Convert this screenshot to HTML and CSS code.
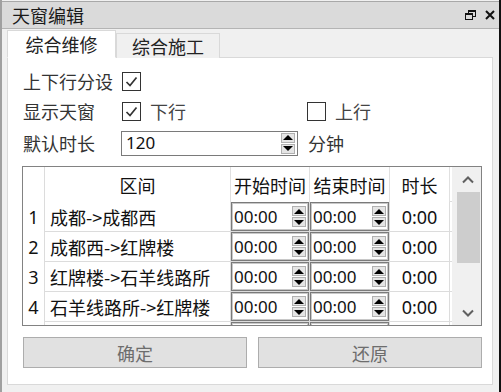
FILE: index.html
```html
<!DOCTYPE html>
<html>
<head>
	<title>天窗编辑</title>
	<link rel="stylesheet" href="styles.css">
</head>
<body>
<div class="window">
	<div class="titlebar">
		<span class="title">天窗编辑</span>
		<span class="tb-icons">
			<svg width="11" height="10" viewBox="0 0 11 10">
				<rect x="3.5" y="0.5" width="7" height="6" fill="none" stroke="#111" stroke-width="1"/>
				<line x1="3" y1="1" x2="11" y2="1" stroke="#111" stroke-width="2"/>
				<rect x="0.5" y="3.5" width="7" height="6" fill="#dadada" stroke="#111" stroke-width="1"/>
				<line x1="0" y1="4" x2="8" y2="4" stroke="#111" stroke-width="2"/>
			</svg>
			<svg width="10" height="10" viewBox="0 0 10 10">
				<path d="M1 1 L9 9 M9 1 L1 9" stroke="#111" stroke-width="2"/>
			</svg>
		</span>
	</div>

	<div class="tabs">
		<div class="tab active">综合维修</div>
		<div class="tab">综合施工</div>
	</div>

	<div class="panel">
		<div class="row">
			<span class="label">上下行分设</span>
			<span class="check on"><svg width="17" height="17" viewBox="0 0 17 17"><path d="M3.5 9 L7 12.5 L13.5 4.5" fill="none" stroke="#333" stroke-width="1.7"/></svg></span>
		</div>
		<div class="row">
			<span class="label">显示天窗</span>
			<span class="opt">
				<span class="check on"><svg width="17" height="17" viewBox="0 0 17 17"><path d="M3.5 9 L7 12.5 L13.5 4.5" fill="none" stroke="#333" stroke-width="1.7"/></svg></span>
				<span class="opt-text">下行</span>
			</span>
			<span class="opt">
				<span class="check"></span>
				<span class="opt-text">上行</span>
			</span>
		</div>
		<div class="row row-tall">
			<span class="label label-narrow">默认时长</span>
			<span class="spin spin-wide">
				<span class="spin-val">120</span>
				<span class="spin-btns">
					<span class="sbtn"><i class="tri up"></i></span>
					<span class="sbtn"><i class="tri down"></i></span>
				</span>
			</span>
			<span class="unit">分钟</span>
		</div>

		<div class="table">
			<div class="cells">
				<div class="hd num"></div>
				<div class="hd">区间</div>
				<div class="hd">开始时间</div>
				<div class="hd">结束时间</div>
				<div class="hd">时长</div>
				<div class="hd fill"></div>

				<div class="num">1</div>
				<div class="cell name">成都-&gt;成都西</div>
				<div class="cell"><span class="spin"><span class="spin-val">00:00</span><span class="spin-btns"><span class="sbtn"><i class="tri up"></i></span><span class="sbtn"><i class="tri down"></i></span></span></span></div>
				<div class="cell"><span class="spin"><span class="spin-val">00:00</span><span class="spin-btns"><span class="sbtn"><i class="tri up"></i></span><span class="sbtn"><i class="tri down"></i></span></span></span></div>
				<div class="cell dur">0:00</div>
				<div class="fill"></div>

				<div class="num">2</div>
				<div class="cell name">成都西-&gt;红牌楼</div>
				<div class="cell"><span class="spin"><span class="spin-val">00:00</span><span class="spin-btns"><span class="sbtn"><i class="tri up"></i></span><span class="sbtn"><i class="tri down"></i></span></span></span></div>
				<div class="cell"><span class="spin"><span class="spin-val">00:00</span><span class="spin-btns"><span class="sbtn"><i class="tri up"></i></span><span class="sbtn"><i class="tri down"></i></span></span></span></div>
				<div class="cell dur">0:00</div>
				<div class="fill"></div>

				<div class="num">3</div>
				<div class="cell name">红牌楼-&gt;石羊线路所</div>
				<div class="cell"><span class="spin"><span class="spin-val">00:00</span><span class="spin-btns"><span class="sbtn"><i class="tri up"></i></span><span class="sbtn"><i class="tri down"></i></span></span></span></div>
				<div class="cell"><span class="spin"><span class="spin-val">00:00</span><span class="spin-btns"><span class="sbtn"><i class="tri up"></i></span><span class="sbtn"><i class="tri down"></i></span></span></span></div>
				<div class="cell dur">0:00</div>
				<div class="fill"></div>

				<div class="num">4</div>
				<div class="cell name">石羊线路所-&gt;红牌楼</div>
				<div class="cell"><span class="spin"><span class="spin-val">00:00</span><span class="spin-btns"><span class="sbtn"><i class="tri up"></i></span><span class="sbtn"><i class="tri down"></i></span></span></span></div>
				<div class="cell"><span class="spin"><span class="spin-val">00:00</span><span class="spin-btns"><span class="sbtn"><i class="tri up"></i></span><span class="sbtn"><i class="tri down"></i></span></span></span></div>
				<div class="cell dur">0:00</div>
				<div class="fill"></div>

				<!-- fifth row only peeks in under the table edge -->
				<div class="num"></div>
				<div class="cell name"></div>
				<div class="cell"><span class="spin"><span class="spin-val"></span><span class="spin-btns"><span class="sbtn"><i class="tri up"></i></span><span class="sbtn"><i class="tri down"></i></span></span></span></div>
				<div class="cell"><span class="spin"><span class="spin-val"></span><span class="spin-btns"><span class="sbtn"><i class="tri up"></i></span><span class="sbtn"><i class="tri down"></i></span></span></span></div>
				<div class="cell dur"></div>
				<div class="fill"></div>
			</div>
			<div class="scrollbar">
				<div class="sb-arrow">
					<svg width="12" height="8" viewBox="0 0 12 8"><path d="M1 6.5 L6 1.5 L11 6.5" fill="none" stroke="#606060" stroke-width="2"/></svg>
				</div>
				<div class="sb-thumb"></div>
				<div class="sb-track"></div>
				<div class="sb-arrow">
					<svg width="12" height="8" viewBox="0 0 12 8"><path d="M1 1.5 L6 6.5 L11 1.5" fill="none" stroke="#606060" stroke-width="2"/></svg>
				</div>
			</div>
		</div>

		<div class="buttons">
			<button class="btn">确定</button>
			<button class="btn">还原</button>
		</div>
	</div>
</div>
</body>
</html>
```

FILE: styles.css
```css
body{
	margin: 0;
	font-family: "Noto Sans CJK SC", "Noto Sans", sans-serif;
	color: #222;
}
.window{
	width: 501px;
	height: 392px;
	box-sizing: border-box;
	border-left: 2px solid #a0a0a0;
	border-right: 2px solid #111;
	background: #f0f0f0;
	display: flex;
	flex-direction: column;
}
.titlebar{
	height: 28px;
	box-sizing: border-box;
	margin-top: 1px;
	background: #dadada;
	border-top: 1px solid #a8a8a8;
	border-bottom: 1px solid #b4b4b4;
	display: flex;
	align-items: center;
	justify-content: space-between;
	padding: 0 4px 0 10px;
}
.title{
	font-size: 18px;
	line-height: 26px;
	color: #1a1a1a;
}
.tb-icons{
	display: flex;
	align-items: center;
	gap: 9px;
}
.tb-icons svg{
	display: block;
}
.tabs{
	display: flex;
	align-items: flex-end;
	padding-left: 5px;
	height: 29px;
	margin-bottom: -1px;
	position: relative;
	z-index: 1;
}
.tab{
	box-sizing: border-box;
	width: 104px;
	height: 25px;
	border: 1px solid #d9d9d9;
	border-bottom: none;
	background: #f0f0f0;
	font-size: 18px;
	line-height: 24px;
	text-align: center;
	color: #222;
}
.tab.active{
	width: 109px;
	height: 28px;
	line-height: 27px;
	background: #fff;
	border-bottom: 1px solid #fff;
}
.panel{
	margin: 0 6px 0 5px;
	height: 328px;
	box-sizing: border-box;
	background: #fff;
	border: 1px solid #d9d9d9;
	padding: 8px 0 0 15px;
}
.row{
	display: flex;
	align-items: center;
	height: 30px;
}
.row-tall{
	height: 34px;
}
.label{
	width: 99px;
	font-size: 18px;
	color: #333;
}
.label-narrow{
	width: 98px;
}
.check{
	width: 19px;
	height: 19px;
	box-sizing: border-box;
	border: 1px solid #333;
	background: #fff;
	display: flex;
	align-items: center;
	justify-content: center;
}
.opt{
	display: flex;
	align-items: center;
	width: 185px;
}
.opt-text{
	margin-left: 9px;
	font-size: 18px;
	color: #444;
}
.spin{
	display: flex;
	align-items: center;
	justify-content: space-between;
	box-sizing: border-box;
	border: 1px solid #7a7a7a;
	background: #fff;
}
.spin-wide{
	width: 177px;
	height: 25px;
	padding: 0 2px 0 4px;
}
.spin-val{
	font-family: "Noto Sans", sans-serif;
	font-size: 17px;
	line-height: 20px;
	color: #111;
}
.spin-btns{
	display: flex;
	flex-direction: column;
	gap: 1px;
}
.sbtn{
	width: 14px;
	height: 10px;
	box-sizing: border-box;
	background: #e5e5e5;
	border: 1px solid #b0b0b0;
	display: flex;
	align-items: center;
	justify-content: center;
}
.tri{
	width: 0;
	height: 0;
	border-left: 5px solid transparent;
	border-right: 5px solid transparent;
}
.tri.up{
	border-bottom: 5px solid #000;
}
.tri.down{
	border-top: 5px solid #000;
}
.unit{
	margin-left: 10px;
	font-size: 18px;
	color: #333;
}
.table{
	margin: 6px 0 0 -1px;
	width: 460px;
	height: 160px;
	box-sizing: border-box;
	border: 1px solid #828282;
	display: flex;
	overflow: hidden;
}
.cells{
	width: 429px;
	display: grid;
	grid-template-columns: 22px 186px 79px 80px 60px 2px;
	grid-template-rows: 35px repeat(5, 30px);
	align-content: start;
}
.hd{
	border-right: 1px solid #e0e0e0;
	font-size: 18px;
	display: flex;
	align-items: center;
	justify-content: center;
	color: #111;
}
.num{
	border-right: 1px solid #dcdcdc;
	font-family: "Noto Sans", sans-serif;
	font-size: 18px;
	display: flex;
	align-items: center;
	justify-content: center;
	color: #111;
}
.hd.fill{
	border-right: none;
}
.cell{
	border-right: 1px solid #dcdcdc;
	border-bottom: 1px solid #dcdcdc;
	display: flex;
	align-items: stretch;
}
.cell.name{
	align-items: center;
	padding-left: 5px;
	font-size: 18px;
	color: #111;
	white-space: nowrap;
}
.cell .spin{
	flex: 1;
	padding: 0 2px 0 2px;
	box-shadow: inset 0 0 0 1px #c8c8c8;
}
.cell.dur{
	align-items: center;
	justify-content: center;
	font-family: "Noto Sans", sans-serif;
	font-size: 18px;
	color: #111;
}
.cells > .fill{
	border-bottom: 1px solid #dcdcdc;
}
.scrollbar{
	width: 29px;
	background: #f0f0f0;
	display: flex;
	flex-direction: column;
}
.sb-arrow{
	height: 25px;
	display: flex;
	align-items: center;
	justify-content: center;
	padding-left: 3px;
}
.sb-thumb{
	height: 71px;
	margin: 0 1px 0 5px;
	background: #cdcdcd;
}
.sb-track{
	flex: 1;
}
.buttons{
	display: flex;
	gap: 11px;
	margin-top: 11px;
}
.btn{
	width: 224px;
	height: 31px;
	background: #e1e1e1;
	border: 1px solid #adadad;
	font-family: "Noto Sans CJK SC", sans-serif;
	font-size: 18px;
	color: #6d6d6d;
	padding: 0;
}
```
